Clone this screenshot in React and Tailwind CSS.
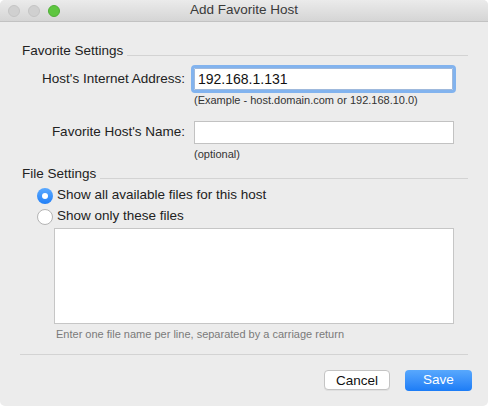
import React, { useState } from 'react';

const font = { fontFamily: '"Liberation Sans", Arial, sans-serif' };

const SectionHeader = ({ title }) => (
  <div className="flex items-end h-4">
    <span className="text-[13.5px] leading-4 text-[#222]">{title}</span>
    <div className="flex-1 ml-[4px] mb-[3px] h-px bg-[#d3d3d3]" />
  </div>
);

const Radio = ({ checked, label, onClick }) => (
  <div className="flex items-center h-[21px] cursor-default" onClick={onClick}>
    {checked ? (
      <div className="w-[16px] h-[16px] rounded-full bg-gradient-to-b from-[#5aa9ff] to-[#1f7ff7] flex items-center justify-center">
        <div className="w-[6px] h-[6px] rounded-full bg-white" />
      </div>
    ) : (
      <div className="w-[16px] h-[16px] rounded-full bg-white border border-[#b4b4b4]" />
    )}
    <span className="ml-[4px] text-[13.5px] text-[#222]">{label}</span>
  </div>
);

export default function App() {
  const [mode, setMode] = useState('all');

  return (
    <div className="w-[488px] h-[406px] bg-white" style={font}>
      <div className="w-full h-full bg-[#ececec] rounded-[5px] overflow-hidden flex flex-col">
        {/* Title bar */}
        <div className="relative h-[22px] shrink-0 bg-gradient-to-b from-[#ebebeb] to-[#d5d5d5] border-b border-[#c2c2c2] flex items-center justify-center">
          <div className="absolute left-[8px] top-[5px] flex gap-[8px]">
            <div className="w-[12px] h-[12px] rounded-full bg-[#d0d0d0] border border-[#c4c4c4]" />
            <div className="w-[12px] h-[12px] rounded-full bg-[#d0d0d0] border border-[#c4c4c4]" />
            <div className="w-[12px] h-[12px] rounded-full bg-[#5ec640] border border-[#4fae37]" />
          </div>
          <span className="text-[13.5px] text-[#3a3a3a]">Add Favorite Host</span>
        </div>

        {/* Content */}
        <div className="flex-1 flex flex-col pl-[22px] pr-[20px] pt-[21px]">
          <SectionHeader title="Favorite Settings" />

          <div className="flex items-center mt-[9px]">
            <label className="w-[163px] text-right text-[13.5px] text-[#222]">Host's Internet Address:</label>
            <div className="ml-[9px] w-[259px] h-[22px] bg-white border border-[#9fb9dc] outline-[3px] outline outline-[#82b3ee] rounded-[1px] flex items-center px-[3px]">
              <span className="text-[14px] text-[#111]">192.168.1.131</span>
            </div>
          </div>
          <div className="ml-[172px] mt-[3px] text-[11px] leading-[14px] text-[#333]">
            (Example - host.domain.com or 192.168.10.0)
          </div>

          <div className="flex items-center mt-[14px]">
            <label className="w-[163px] text-right text-[13.5px] text-[#222]">Favorite Host's Name:</label>
            <div className="ml-[9px] w-[260px] h-[23px] bg-white border border-[#c2c2c2]" />
          </div>
          <div className="ml-[172px] mt-[3px] text-[11px] leading-[14px] text-[#333]">(optional)</div>

          <div className="mt-[5px]">
            <SectionHeader title="File Settings" />
          </div>

          <div className="ml-[15px] mt-[3px] flex flex-col">
            <Radio checked={mode === 'all'} label="Show all available files for this host" onClick={() => setMode('all')} />
            <Radio checked={mode === 'only'} label="Show only these files" onClick={() => setMode('only')} />
          </div>

          <div className="ml-[32px] mt-[1px] w-[400px] h-[96px] bg-white border border-[#c6c6c6]" />
          <div className="ml-[34px] mt-[3px] text-[11px] leading-[14px] text-[#7a7a7a]">
            Enter one file name per line, separated by a carriage return
          </div>

          <div className="-ml-[2px] mt-[13px] h-px bg-[#d3d3d3]" />

          <div className="flex justify-end gap-[15px] mt-[15px] -mr-[4px]">
            <button className="w-[66px] h-[20px] bg-white border border-[#c4c4c4] rounded-[4px] text-[13.5px] text-[#111] shadow-[0_1px_0_rgba(0,0,0,0.05)]">
              Cancel
            </button>
            <button className="w-[67px] h-[21px] rounded-[4px] bg-gradient-to-b from-[#58a8fd] to-[#1b7cf6] text-[13.5px] text-white">
              Save
            </button>
          </div>
        </div>
      </div>
    </div>
  );
}
